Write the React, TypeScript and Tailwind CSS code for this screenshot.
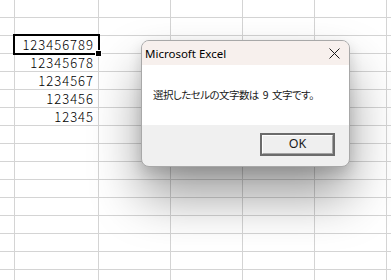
import React from "react";

const ROWS = 16;
const colW = [15, 84, 72, 72, 72, 72, 10];
const nums: Record<number, string> = {
  2: "123456789",
  3: "12345678",
  4: "1234567",
  5: "123456",
  6: "12345",
};

export default function App() {
  return (
    <div className="relative w-[391px] h-[280px] overflow-hidden bg-white">
      <div className="flex flex-col">
        {Array.from({ length: ROWS }).map((_, r) => (
          <div key={r} className="flex h-[18px] shrink-0">
            {colW.map((w, c) => (
              <div
                key={c}
                style={{ width: w }}
                className="shrink-0 h-[18px] border-r border-b border-[#d4d4d4] flex items-center justify-end pr-[4px] text-[13px] font-light tracking-[1px] text-black [font-family:'Noto_Sans_CJK_JP',sans-serif] leading-none"
              >
                {c === 1 && nums[r] ? nums[r] : ""}
              </div>
            ))}
          </div>
        ))}
      </div>

      {/* selection */}
      <div className="absolute left-[13px] top-[34px] w-[87px] h-[21px] border-2 border-black" />
      <div className="absolute left-[95px] top-[50px] w-[7px] h-[7px] bg-black border border-white" />

      {/* dialog */}
      <div className="absolute left-[141px] top-[40px] w-[209px] h-[127px] rounded-[8px] border border-[#a8a8a8] bg-[#f0f0f0] overflow-hidden shadow-[0_30px_50px_rgba(0,0,0,0.38),0_6px_14px_rgba(0,0,0,0.14)] flex flex-col">
        <div className="h-[24px] bg-[#f7f0ed] flex items-center justify-between pl-[3px] pr-[9px] shrink-0">
          <span className="text-[11.5px] text-black [font-family:'Noto_Sans',sans-serif] leading-none mt-[1px]">
            Microsoft Excel
          </span>
          <svg width="11" height="11" viewBox="0 0 11 11" className="mt-[1px]">
            <path d="M0.5 0.5 L10.5 10.5 M10.5 0.5 L0.5 10.5" stroke="#1a1a1a" strokeWidth="1" />
          </svg>
        </div>
        <div className="h-[60px] bg-white flex items-center pl-[11px] shrink-0">
          <span className="text-[10.5px] tracking-[-0.55px] text-[#1a1a1a] [font-family:'Noto_Sans_CJK_JP',sans-serif] [font-feature-settings:'palt'] leading-none whitespace-pre">
            選択したセルの文字数は<span className="px-[4px]">9</span>文字です。
          </span>
        </div>
        <div className="flex-1 flex justify-end items-start pt-[8px] pr-[14px]">
          <div className="w-[75px] h-[23px] border-2 border-[#6b6b6b] bg-[#efefef]">
            <div className="w-full h-full border-t border-l border-white border-b border-r border-b-[#a3a3a3] border-r-[#a3a3a3] flex items-center justify-center text-[12.5px] text-[#1a1a1a] [font-family:'Noto_Sans',sans-serif] leading-none">
              OK
            </div>
          </div>
        </div>
      </div>
    </div>
  );
}
